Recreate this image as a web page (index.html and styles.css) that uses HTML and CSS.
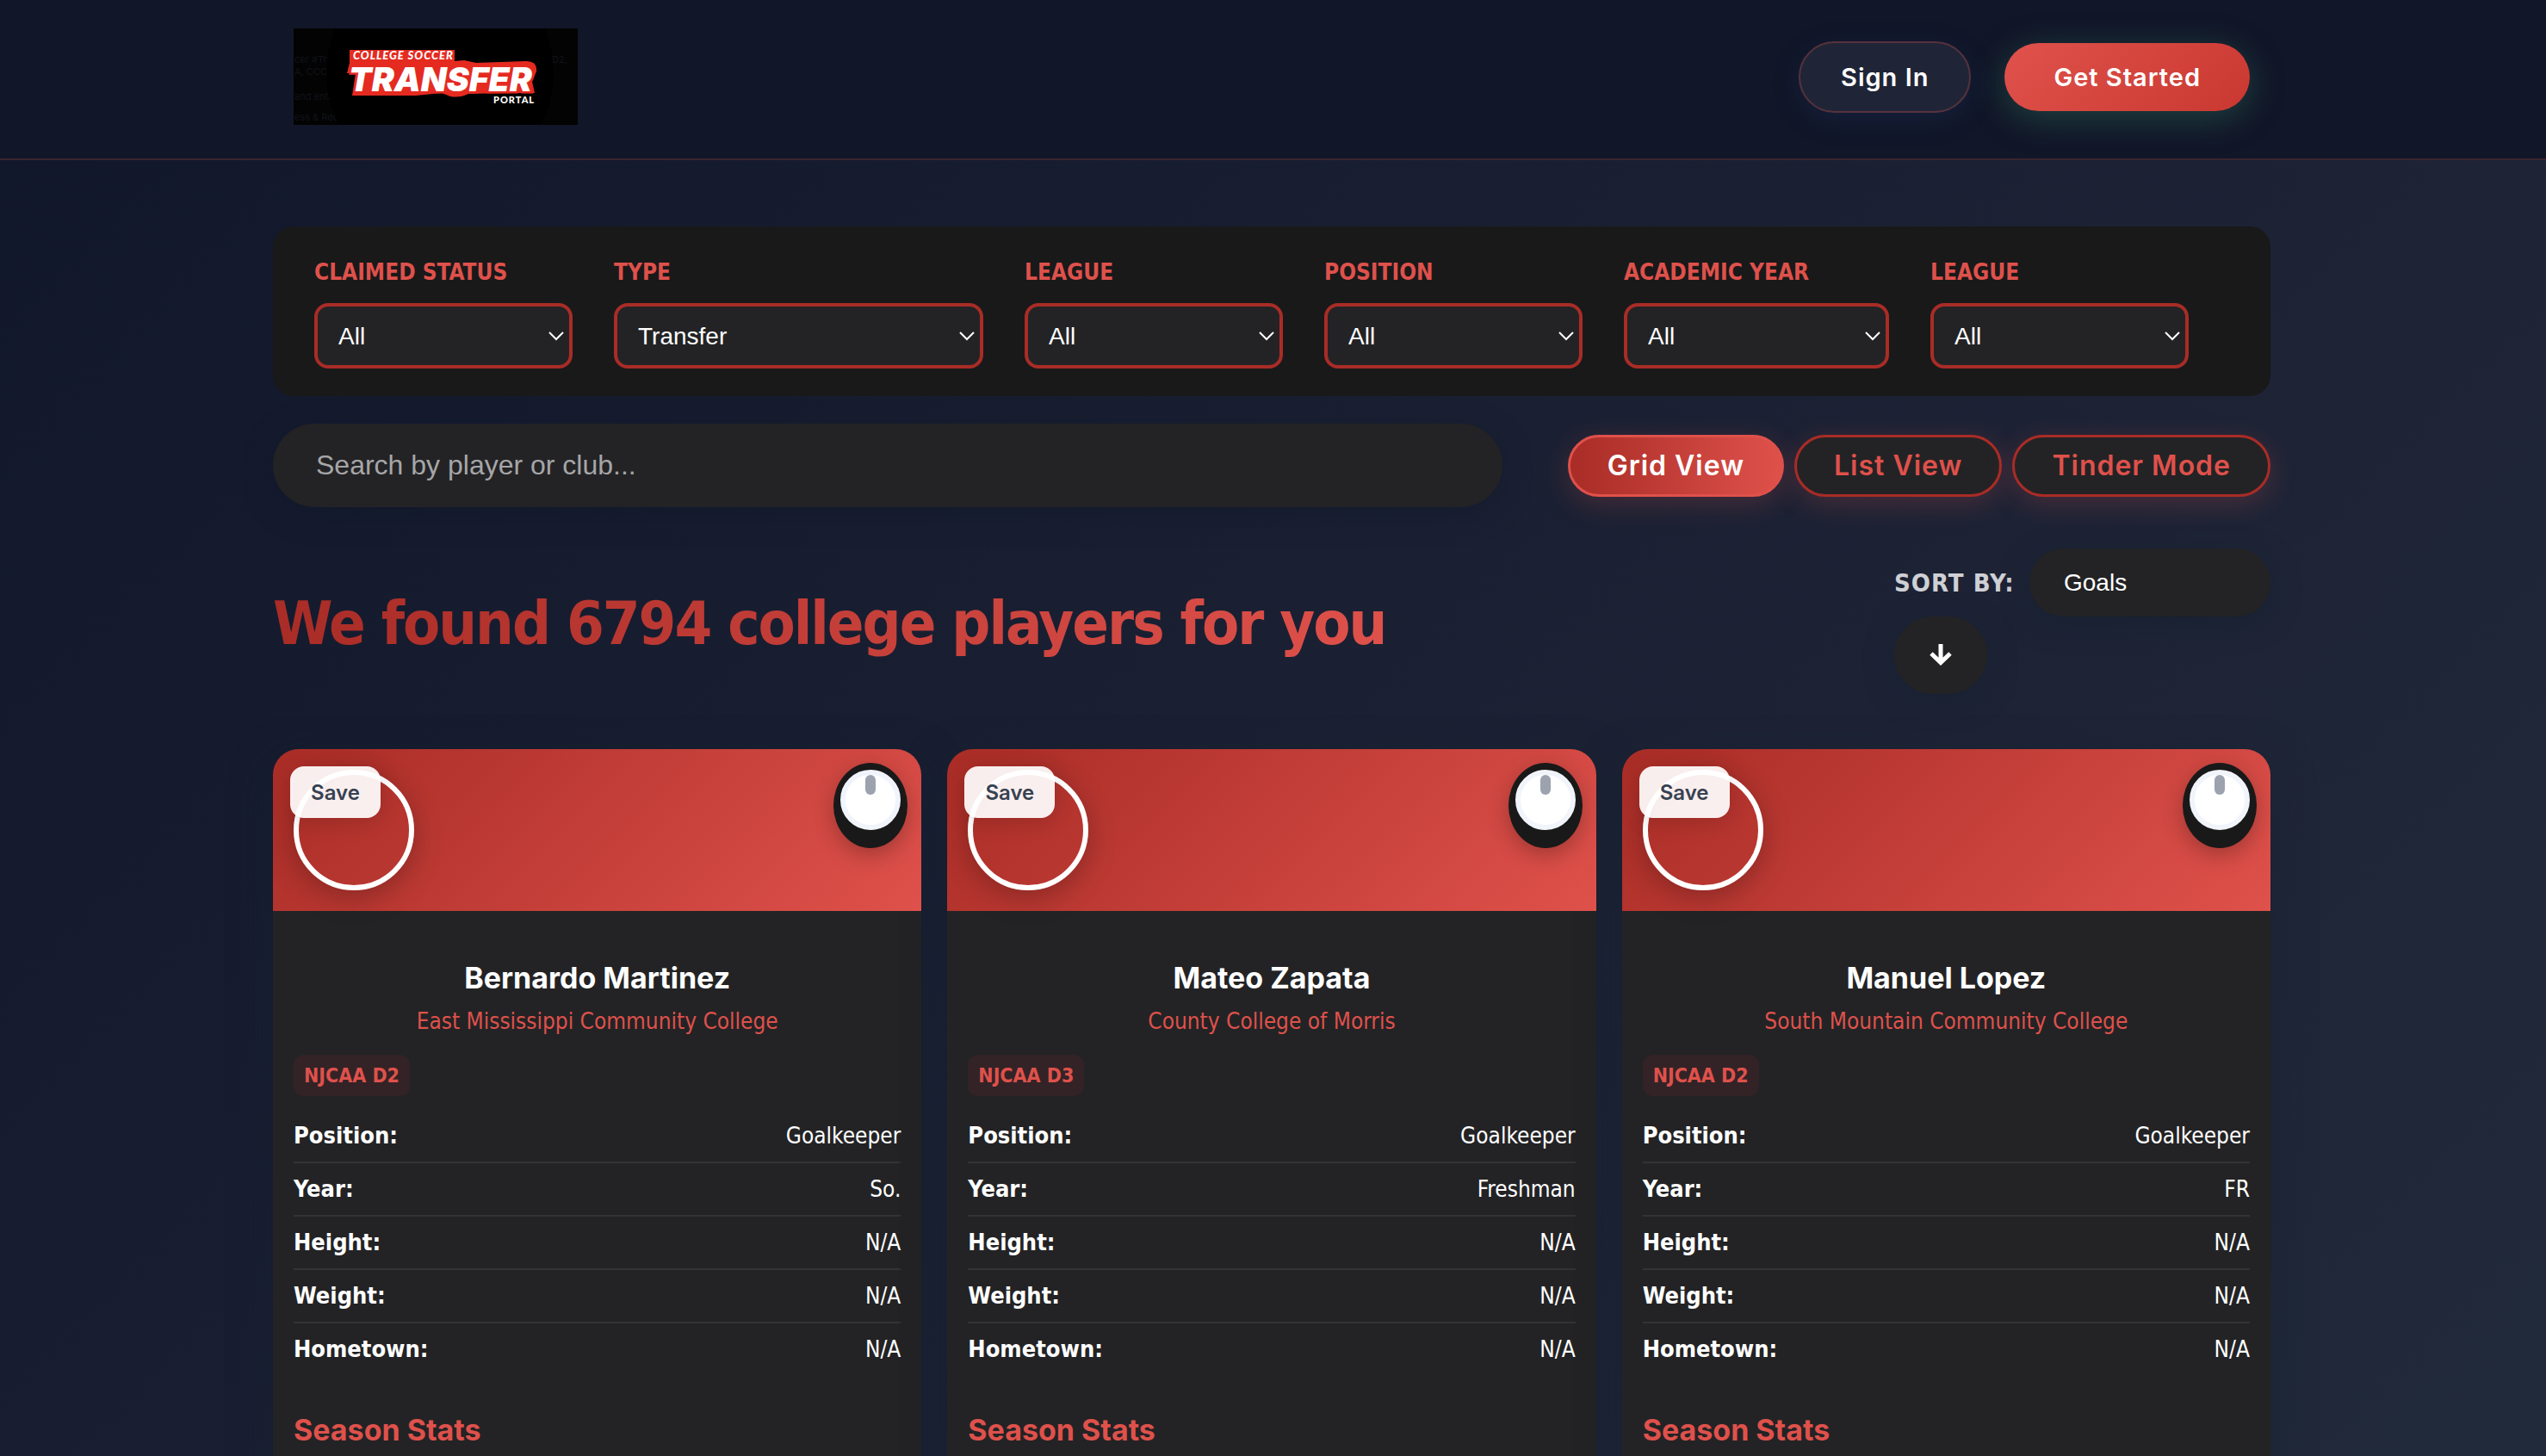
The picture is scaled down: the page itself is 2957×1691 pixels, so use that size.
FILE: index.html
```html
<!DOCTYPE html>
<html lang="en">
<head>
<meta charset="utf-8">
<meta name="viewport" content="width=device-width, initial-scale=1">
<title>College Soccer Transfer Portal</title>
<link rel="stylesheet" href="styles.css">
</head>
<body>
<header class="site-header">
  <a class="brand" href="#" aria-label="College Soccer Transfer Portal">
    <svg class="logo" viewBox="0 0 330 112">
      <rect width="330" height="112" fill="#030303"/>
      <g class="logo-faint">
        <text x="1" y="40">cer #Tra</text>
        <text x="1" y="54">A, CCC</text>
        <text x="1" y="83">and enti</text>
        <text x="1" y="107">ess &amp; Rec</text>
        <text x="300" y="40">D2,</text>
      </g>
      <circle cx="170" cy="52" r="132" fill="#000"/>
      <path d="M65 25H187V38L198 37L212 40L270 38Q283 38 282 50L277 62L280 75H246L203 76Q193 81 182 79L172 75L142 78H104L68 78L72 52H62L65 40Z" fill="#e52a20"/>
      <text class="logo-top" x="69" y="36">COLLEGE SOCCER</text>
      <text class="logo-main" x="64" y="73">TRANSFER</text>
      <text class="logo-sub" x="232" y="87">PORTAL</text>
    </svg>
  </a>
  <nav class="account">
    <button class="btn btn-ghost" type="button">Sign In</button>
    <button class="btn btn-primary" type="button">Get Started</button>
  </nav>
</header>

<main class="page">
  <form class="filters">
    <div class="field"><label for="claimed">Claimed Status</label><select id="claimed"><option>All</option></select></div>
    <div class="field field-wide"><label for="type">Type</label><select id="type"><option>Transfer</option></select></div>
    <div class="field"><label for="league">League</label><select id="league"><option>All</option></select></div>
    <div class="field"><label for="position">Position</label><select id="position"><option>All</option></select></div>
    <div class="field field-year"><label for="year">Academic Year</label><select id="year"><option>All</option></select></div>
    <div class="field"><label for="league2">League</label><select id="league2"><option>All</option></select></div>
  </form>

  <div class="toolbar">
    <input class="search" type="text" aria-label="Search players" placeholder="Search by player or club...">
    <div class="views">
      <button class="view view-active" type="button">Grid View</button>
      <button class="view" type="button">List View</button>
      <button class="view" type="button">Tinder Mode</button>
    </div>
  </div>

  <div class="results-head">
    <h1>We found 6794 college players for you</h1>
    <div class="sort">
      <label for="sort">SORT BY:</label>
      <select id="sort"><option>Goals</option></select>
      <button class="sort-dir" type="button" aria-label="Sort descending">
        <svg width="26" height="26" viewBox="0 0 26 26" fill="none" stroke="#fff" stroke-width="5"><path d="M13 0V22M2 11L13 21.500L24 11"/></svg>
      </button>
    </div>
  </div>

  <section class="grid">
    <article class="card">
      <div class="banner">
        <div class="avatar"></div>
        <button class="save" type="button">Save</button>
        <div class="knob"><div class="knob-face"></div></div>
      </div>
      <div class="body">
        <h2>Bernardo Martinez</h2>
        <p class="school">East Mississippi Community College</p>
        <span class="badge">NJCAA D2</span>
        <dl class="facts">
          <div><dt>Position:</dt><dd>Goalkeeper</dd></div>
          <div><dt>Year:</dt><dd>So.</dd></div>
          <div><dt>Height:</dt><dd>N/A</dd></div>
          <div><dt>Weight:</dt><dd>N/A</dd></div>
          <div><dt>Hometown:</dt><dd>N/A</dd></div>
        </dl>
        <h3>Season Stats</h3>
      </div>
    </article>
    <article class="card">
      <div class="banner">
        <div class="avatar"></div>
        <button class="save" type="button">Save</button>
        <div class="knob"><div class="knob-face"></div></div>
      </div>
      <div class="body">
        <h2>Mateo Zapata</h2>
        <p class="school">County College of Morris</p>
        <span class="badge">NJCAA D3</span>
        <dl class="facts">
          <div><dt>Position:</dt><dd>Goalkeeper</dd></div>
          <div><dt>Year:</dt><dd>Freshman</dd></div>
          <div><dt>Height:</dt><dd>N/A</dd></div>
          <div><dt>Weight:</dt><dd>N/A</dd></div>
          <div><dt>Hometown:</dt><dd>N/A</dd></div>
        </dl>
        <h3>Season Stats</h3>
      </div>
    </article>
    <article class="card">
      <div class="banner">
        <div class="avatar"></div>
        <button class="save" type="button">Save</button>
        <div class="knob"><div class="knob-face"></div></div>
      </div>
      <div class="body">
        <h2>Manuel Lopez</h2>
        <p class="school">South Mountain Community College</p>
        <span class="badge">NJCAA D2</span>
        <dl class="facts">
          <div><dt>Position:</dt><dd>Goalkeeper</dd></div>
          <div><dt>Year:</dt><dd>FR</dd></div>
          <div><dt>Height:</dt><dd>N/A</dd></div>
          <div><dt>Weight:</dt><dd>N/A</dd></div>
          <div><dt>Hometown:</dt><dd>N/A</dd></div>
        </dl>
        <h3>Season Stats</h3>
      </div>
    </article>
  </section>
</main>
</body>
</html>
```

FILE: styles.css
```css
:root {
  --red: #df514b;
  --red-dark: #a92c26;
  --panel: #19191a;
  --surface: #232325;
  --body-font: "DejaVu Sans Condensed", "Noto Sans", sans-serif;
  --display-font: Inter, sans-serif;
  --control-font: "Liberation Sans", Arial, sans-serif;
}

* { box-sizing: border-box; }

html { background: #161c2f; }

body {
  margin: 0;
  height: 100vh;
  overflow: hidden;
  font-family: var(--body-font);
  font-size: 26px;
  color: #fff;
  background: linear-gradient(135deg, #11172a 0%, #1d2335 64%, #212a3a 100%);
}

button { font-family: var(--display-font); cursor: pointer; }
h1, h2, h3, p, dl, dd { margin: 0; }

.site-header {
  display: flex;
  align-items: center;
  justify-content: space-between;
  padding: 33px 344px 39px 341px;
  background: #111628;
  border-bottom: 2px solid #3b2430;
}

.brand, .logo { display: block; }
.logo { width: 330px; height: 112px; }
.logo text { font-family: Lato, sans-serif; fill: #fff; }
.logo .logo-faint text { font-family: Inter, sans-serif; font-size: 11px; fill: #10131a; }
.logo .logo-top { font-size: 13px; font-weight: 900; font-style: italic; letter-spacing: 1px; }
.logo .logo-main {
  font-family: Inter, sans-serif;
  font-size: 39px;
  font-weight: 900;
  font-style: italic;
  stroke: #e52a20;
  stroke-width: 5px;
  paint-order: stroke;
}
.logo .logo-sub { font-size: 11px; font-weight: 900; letter-spacing: 1px; }

.account { display: flex; align-items: center; gap: 39px; }

.btn {
  border-radius: 42px;
  font-size: 29px;
  font-weight: 600;
  line-height: 35px;
  letter-spacing: 1px;
  color: #fff;
}
.btn-ghost {
  padding: 22px 47px;
  border: 2px solid #57323d;
  background: #1f2537;
  box-shadow: 0 8px 30px rgba(30, 64, 110, .25);
}
.btn-primary {
  padding: 22px 57px;
  border: 0;
  background: linear-gradient(135deg, #e0524c, #c93830);
  box-shadow: 0 8px 40px rgba(60, 150, 110, .35);
}

.page { padding: 77px 320px 0 317px; }

.filters {
  display: flex;
  gap: 48px;
  padding: 33px 48px 32px;
  border-radius: 24px;
  background: var(--panel);
}
.field { display: flex; flex-direction: column; gap: 15px; width: 300px; }
.field-wide { width: 429px; }
.field-year { width: 308px; }
.field label {
  font-weight: 700;
  line-height: 41px;
  text-transform: uppercase;
  color: var(--red);
}

select { appearance: none; font-family: var(--control-font); font-size: 28px; color: #fff; }
.field select {
  height: 76px;
  padding: 0 24px;
  border: 4px solid var(--red-dark);
  border-radius: 16px;
  background: var(--surface) url("data:image/svg+xml,%3Csvg xmlns='http://www.w3.org/2000/svg' width='18' height='12' fill='none' stroke='white' stroke-width='2'%3E%3Cpath d='M1 2L9 10L17 2'/%3E%3C/svg%3E") no-repeat right 6px center;
}

.toolbar { display: flex; align-items: center; gap: 76px; margin-top: 32px; }
.search {
  flex: 1;
  min-width: 0;
  height: 97px;
  padding: 0 50px;
  border: 0;
  border-radius: 49px;
  background: var(--surface);
  color: #fff;
  font-family: var(--control-font);
  font-size: 32px;
  box-shadow: 0 8px 32px rgba(15, 23, 42, .5);
}
.search::placeholder { color: #a6a6a8; opacity: 1; }

.views { display: flex; gap: 12px; }
.view {
  height: 72px;
  padding: 0 43px;
  border: 3px solid var(--red-dark);
  border-radius: 36px;
  background: var(--surface);
  color: var(--red);
  font-size: 32px;
  font-weight: 600;
  letter-spacing: 1px;
  box-shadow: 0 8px 32px rgba(224, 82, 76, .22);
}
.view-active {
  border-color: var(--red);
  background: linear-gradient(90deg, var(--red-dark), var(--red));
  color: #fff;
}

.results-head {
  display: flex;
  align-items: center;
  justify-content: space-between;
  margin-top: 48px;
}
h1 {
  padding-top: 4px;
  font-size: 70px;
  line-height: 84px;
  letter-spacing: -2px;
  color: transparent;
  background: linear-gradient(90deg, var(--red-dark), var(--red));
  background-clip: text;
}
.sort { display: flex; flex-wrap: wrap; align-items: center; justify-content: space-between; width: 437px; }
.sort label { font-size: 29px; font-weight: 700; letter-spacing: 1px; color: #cfd0d5; }
.sort select {
  width: 280px;
  height: 79px;
  padding: 0 40px;
  border: 0;
  border-radius: 40px;
  background: var(--surface);
  box-shadow: 0 8px 32px rgba(20, 32, 48, .6);
}
.sort-dir {
  display: flex;
  align-items: center;
  justify-content: center;
  width: 108px;
  height: 90px;
  border: 0;
  border-radius: 45px;
  background: var(--surface);
  box-shadow: 0 8px 32px rgba(20, 32, 48, .6);
}

.grid { display: grid; grid-template-columns: repeat(3, 1fr); gap: 30px; margin-top: 64px; }
.card {
  overflow: hidden;
  border-radius: 30px;
  background: var(--surface);
  box-shadow: 0 16px 48px rgba(20, 32, 48, .5);
}
.banner {
  position: relative;
  height: 188px;
  padding: 24px;
  background: linear-gradient(135deg, var(--red-dark), var(--red));
}
.avatar {
  width: 140px;
  height: 140px;
  border: 6px solid #fff;
  border-radius: 50%;
  box-shadow: 0 8px 32px rgba(0, 0, 0, .25);
}
.save {
  position: absolute;
  top: 20px;
  left: 20px;
  width: 105px;
  height: 60px;
  padding: 0;
  border: 0;
  border-radius: 16px;
  background: rgba(255, 255, 255, .92);
  color: #374151;
  font-size: 24px;
  font-weight: 600;
  box-shadow: 0 4px 24px rgba(0, 0, 0, .15);
}
.knob {
  position: absolute;
  top: 16px;
  right: 16px;
  width: 86px;
  height: 99px;
  padding: 8px;
  border-radius: 50%;
  background: var(--panel);
  box-shadow: 0 8px 24px rgba(0, 0, 0, .25);
}
.knob-face {
  height: 70px;
  border: 6px solid #f1f5fb;
  border-radius: 50%;
  background: #fff;
}
.knob-face::before {
  content: "";
  display: block;
  width: 12px;
  height: 23px;
  margin: 0 auto;
  border-radius: 6px;
  background: #9ca3af;
}

.body { padding: 56px 24px 160px; }
h2 {
  font-family: var(--display-font);
  font-size: 34px;
  line-height: 44px;
  text-align: center;
}
.school { line-height: 40px; margin-top: 8px; text-align: center; color: var(--red); }
.badge {
  display: block;
  width: max-content;
  margin-top: 19px;
  padding: 0 12px;
  border-radius: 12px;
  background: #332326;
  color: var(--red);
  font-size: 23px;
  font-weight: 700;
  line-height: 48px;
}
.facts { margin-top: 16px; }
.facts div {
  display: flex;
  justify-content: space-between;
  line-height: 60px;
  border-bottom: 2px solid #333335;
}
.facts div:last-child { border-bottom: 0; }
.facts dt { font-size: 27px; font-weight: 700; }
h3 {
  margin-top: 44px;
  font-family: var(--display-font);
  font-size: 34px;
  line-height: 40px;
  color: var(--red);
}
```
